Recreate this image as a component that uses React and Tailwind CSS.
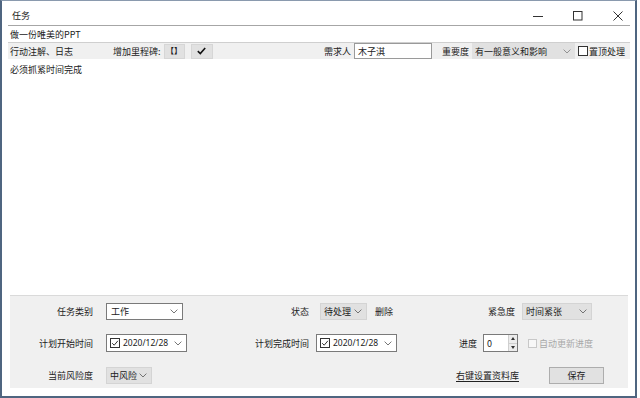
const Chevron = ({ color = "#666" }) => (
  <svg width="8" height="5" viewBox="0 0 8 5" className="shrink-0">
    <path d="M0.6 0.6 L4 4 L7.4 0.6" fill="none" stroke={color} strokeWidth="0.9" />
  </svg>
)

const CheckedBox = () => (
  <svg width="10" height="10" viewBox="0 0 10 10" className="shrink-0">
    <rect x="0.5" y="0.5" width="9" height="9" fill="#fff" stroke="#333" strokeWidth="1" />
    <path d="M2.2 5.2 L4.2 7.2 L7.9 2.8" fill="none" stroke="#333" strokeWidth="1" />
  </svg>
)

const WhiteSelect = ({ value, w }) => (
  <div className={`${w} h-[17px] bg-white border border-[#7a7a7a] flex items-center justify-between pl-[4px] pr-[4px]`}>
    <span>{value}</span>
    <Chevron />
  </div>
)

const GreySelect = ({ value, w }) => (
  <div className={`${w} h-[17px] bg-[#e1e1e1] border border-[#d4d4d4] flex items-center justify-between pl-[3px] pr-[4px]`}>
    <span>{value}</span>
    <Chevron />
  </div>
)

const DatePicker = ({ value }) => (
  <div className="w-[81px] h-[18px] bg-white border border-[#7a7a7a] flex items-center pl-[3px] pr-[4px]">
    <CheckedBox />
    <span className="ml-[3px] text-[8.5px] font-['Noto_Sans',sans-serif]">{value}</span>
    <span className="ml-auto">
      <Chevron />
    </span>
  </div>
)

export default function App() {
  return (
    <div className="w-[640px] h-[398px] bg-white overflow-hidden font-['Noto_Sans_CJK_SC',sans-serif] text-[9px] leading-none text-[#222]">
      <div className="w-[637px] h-[398px] border-x-2 border-b-2 border-t border-[#4f6580] border-t-[#8a9aae] flex flex-col">
        {/* title bar */}
        <div className="h-[24px] shrink-0 flex items-center pl-[8px]">
          <span className="ml-[2px] mt-[4px]">任务</span>
          <div className="ml-auto flex items-center mt-[5px] mr-[12px]">
            <svg width="10" height="10" viewBox="0 0 10 10">
              <path d="M0 5.5 H10" stroke="#333" strokeWidth="1" />
            </svg>
            <svg width="10" height="10" viewBox="0 0 10 10" className="ml-[30px]">
              <rect x="0.5" y="0.5" width="8.5" height="8.5" fill="none" stroke="#333" strokeWidth="1" />
            </svg>
            <svg width="10" height="10" viewBox="0 0 10 10" className="ml-[30px]">
              <path d="M0.5 0.5 L9.5 9.5 M9.5 0.5 L0.5 9.5" stroke="#333" strokeWidth="1" />
            </svg>
          </div>
        </div>

        <div className="flex-1 flex flex-col pl-[6px] pr-[5px]">
          {/* task title */}
          <div className="h-[17px] shrink-0 border-t border-[#a6a6a6] flex items-center pl-[2px]">
            做一份唯美的PPT
          </div>

          {/* toolbar */}
          <div className="h-[17px] shrink-0 bg-[#f0f0f0] border-t border-[#cfcfcf] flex items-center">
            <span className="w-[105px] pl-[2px]">行动注解、日志</span>
            <span>增加里程碑:</span>
            <div className="ml-[3px] w-[21px] h-[15px] bg-[#e1e1e1] border border-[#d6d6d6] flex items-center justify-center text-[8px] font-bold">
              【】
            </div>
            <div className="ml-[6px] w-[22px] h-[15px] bg-[#e1e1e1] border border-[#d6d6d6] flex items-center justify-center">
              <svg width="9" height="8" viewBox="0 0 9 8">
                <path d="M0.8 4.2 L3.3 6.6 L8.2 1" fill="none" stroke="#111" strokeWidth="1.6" />
              </svg>
            </div>
            <div className="ml-auto flex items-center pr-[5px]">
              <span>需求人</span>
              <div className="ml-[3px] w-[78px] h-[16px] bg-white border border-[#9a9a9a] flex items-center pl-[3px]">
                木子淇
              </div>
              <span className="ml-[10px]">重要度</span>
              <div className="ml-[3px] w-[103px] h-[16px] bg-[#e1e1e1] flex items-center justify-between pl-[3px] pr-[4px]">
                <span>有一般意义和影响</span>
                <Chevron color="#888" />
              </div>
              <div className="ml-[3px] w-[10px] h-[10px] bg-white border border-[#333]" />
              <span className="ml-[1px]">置顶处理</span>
            </div>
          </div>

          {/* memo */}
          <div className="flex-1 bg-white pl-[2px] pt-[6px]">必须抓紧时间完成</div>

          {/* bottom panel */}
          <div className="h-[93px] shrink-0 mx-[2px] bg-[#f0f0f0] border-t border-[#dadada] flex flex-col pt-[6px] gap-[14px]">
            <div className="h-[18px] flex items-center">
              <span className="w-[83px] text-right">任务类别</span>
              <div className="ml-[13px]">
                <WhiteSelect value="工作" w="w-[77px]" />
              </div>
              <span className="w-[126px] text-right">状态</span>
              <div className="ml-[11px]">
                <GreySelect value="待处理" w="w-[47px]" />
              </div>
              <span className="ml-[8px] w-[18px]">删除</span>
              <span className="w-[122px] text-right">紧急度</span>
              <div className="ml-[7px]">
                <GreySelect value="时间紧张" w="w-[70px]" />
              </div>
            </div>

            <div className="h-[18px] flex items-center">
              <span className="w-[83px] text-right">计划开始时间</span>
              <div className="ml-[13px]">
                <DatePicker value="2020/12/28" />
              </div>
              <span className="w-[122px] text-right">计划完成时间</span>
              <div className="ml-[7px]">
                <DatePicker value="2020/12/28" />
              </div>
              <span className="w-[80px] text-right">进度</span>
              <div className="ml-[6px] w-[35px] h-[18px] bg-white border border-[#7a7a7a] flex">
                <span className="flex-1 flex items-center pl-[3px]">0</span>
                <div className="w-[9px] flex flex-col border-l border-[#cfcfcf]">
                  <div className="flex-1 bg-[#ececec] flex items-center justify-center border-b border-[#cfcfcf]">
                    <svg width="4" height="3" viewBox="0 0 4 3">
                      <path d="M0 3 L2 0 L4 3 Z" fill="#333" />
                    </svg>
                  </div>
                  <div className="flex-1 bg-[#ececec] flex items-center justify-center">
                    <svg width="4" height="3" viewBox="0 0 4 3">
                      <path d="M0 0 L2 3 L4 0 Z" fill="#333" />
                    </svg>
                  </div>
                </div>
              </div>
              <div className="ml-[10px] w-[9px] h-[9px] bg-[#f7f7f7] border border-[#c8c8c8]" />
              <span className="ml-[2px] text-[#a8a8a8]">自动更新进度</span>
            </div>

            <div className="h-[18px] flex items-center">
              <span className="w-[83px] text-right">当前风险度</span>
              <div className="ml-[13px]">
                <GreySelect value="中风险" w="w-[46px]" />
              </div>
              <span className="ml-[304px] underline underline-offset-2">右键设置资料库</span>
              <div className="ml-[30px] w-[55px] h-[17px] bg-[#e1e1e1] border border-[#adadad] flex items-center justify-center">
                保存
              </div>
            </div>
          </div>

          <div className="h-[8px] shrink-0" />
        </div>
      </div>
    </div>
  )
}
